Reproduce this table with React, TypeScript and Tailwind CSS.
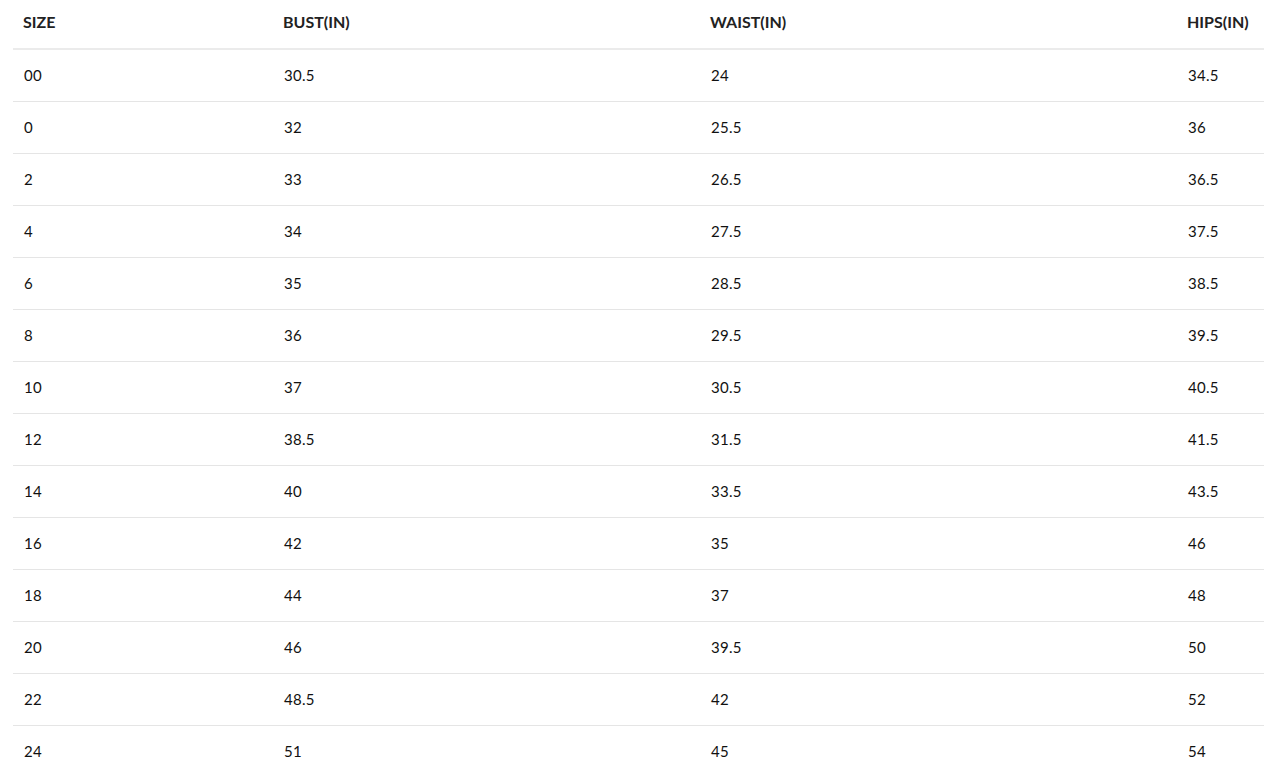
import React from 'react';

const rows: [string, string, string, string][] = [
  ['00', '30.5', '24', '34.5'],
  ['0', '32', '25.5', '36'],
  ['2', '33', '26.5', '36.5'],
  ['4', '34', '27.5', '37.5'],
  ['6', '35', '28.5', '38.5'],
  ['8', '36', '29.5', '39.5'],
  ['10', '37', '30.5', '40.5'],
  ['12', '38.5', '31.5', '41.5'],
  ['14', '40', '33.5', '43.5'],
  ['16', '42', '35', '46'],
  ['18', '44', '37', '48'],
  ['20', '46', '39.5', '50'],
  ['22', '48.5', '42', '52'],
  ['24', '51', '45', '54'],
];

export default function App() {
  return (
    <div className="bg-white min-h-screen overflow-hidden pl-[13px] font-['Lato','Liberation_Sans',sans-serif]">
      <table className="table-fixed w-[1251px] border-separate border-spacing-0 text-left">
        <colgroup>
          <col className="w-[260px]" />
          <col className="w-[427px]" />
          <col className="w-[477px]" />
          <col className="w-[87px]" />
        </colgroup>
        <thead>
          <tr>
            {['SIZE', 'BUST(IN)', 'WAIST(IN)', 'HIPS(IN)'].map((h) => (
              <th
                key={h}
                className="h-[50px] px-[10px] pb-[5px] border-b-2 border-[#ebebeb] text-[16px] font-bold text-[#222222] align-middle whitespace-nowrap"
              >
                {h}
              </th>
            ))}
          </tr>
        </thead>
        <tbody>
          {rows.map((r, i) => (
            <tr key={i}>
              {r.map((c, j) => (
                <td key={j} className="h-[52px] px-[10px] pl-[11px] border-b border-[#e5e5e5] text-[15px] tracking-[0.3px] text-[#111111] align-middle">
                  {c}
                </td>
              ))}
            </tr>
          ))}
        </tbody>
      </table>
    </div>
  );
}
